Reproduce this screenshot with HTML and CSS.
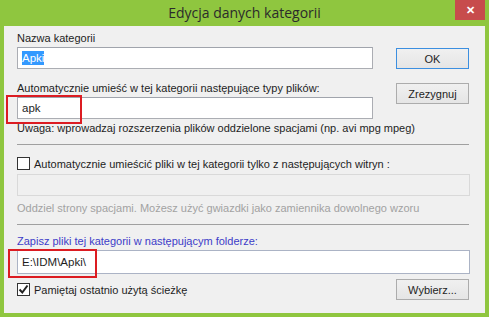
FILE: index.html
```html
<!DOCTYPE html>
<html lang="pl">
<head>
    <meta charset="UTF-8">
    <title>Edycja danych kategorii</title>
    <link rel="stylesheet" href="styles.css">
</head>
<body>
    <div class="window">
        <div class="titlebar">
            <span class="title">Edycja danych kategorii</span>
            <span class="close-btn">&#x2715;</span>
        </div>

        <div class="content">
            <div class="top">
                <div class="fields">
                    <label class="label">Nazwa kategorii</label>
                    <div class="input"><span class="selected">Apki</span></div>

                    <label class="label label-gap">Automatycznie umieść w tej kategorii następujące typy plików:</label>
                    <div class="input mark-wrap">
                        apk
                        <span class="mark mark-types"></span>
                    </div>
                </div>
                <div class="buttons">
                    <button class="btn btn-default">OK</button>
                    <button class="btn">Zrezygnuj</button>
                </div>
            </div>

            <p class="hint">Uwaga: wprowadzaj rozszerzenia plików oddzielone spacjami (np. avi mpg mpeg)</p>

            <hr class="sep">

            <div class="check-row">
                <span class="checkbox"></span>
                <span>Automatycznie umieścić pliki w tej kategorii tylko z następujących witryn :</span>
            </div>
            <div class="input input-disabled"></div>
            <p class="hint hint-disabled">Oddziel strony spacjami. Możesz użyć gwiazdki jako zamiennika dowolnego wzoru</p>

            <hr class="sep">

            <label class="label label-blue">Zapisz pliki tej kategorii w następującym folderze:</label>
            <div class="input input-folder mark-wrap">
                E:\IDM\Apki\
                <span class="mark mark-folder"></span>
            </div>

            <div class="bottom">
                <div class="check-row">
                    <span class="checkbox checked">
                        <svg width="11" height="11" viewBox="0 0 11 11"><path d="M1.5 5.5 L4.3 8.5 L9.5 1.5" fill="none" stroke="#222" stroke-width="2"/></svg>
                    </span>
                    <span>Pamiętaj ostatnio użytą ścieżkę</span>
                </div>
                <button class="btn">Wybierz...</button>
            </div>
        </div>
    </div>
</body>
</html>
```

FILE: styles.css
```css
body {
    margin: 0;
    font-family: "Liberation Sans", Arial, sans-serif;
    font-size: 11px;
    color: #1e1e1e;
}
.window {
    width: 489px;
    height: 317px;
    background-color: #8fc63f;
    padding: 0 4px 4px;
    box-sizing: border-box;
    display: flex;
    flex-direction: column;
}
.titlebar {
    height: 26px;
    flex-shrink: 0;
    display: flex;
    align-items: center;
    justify-content: center;
    position: relative;
}
.title {
    font-family: "Open Sans", sans-serif;
    font-size: 14px;
    color: #2b2b2b;
    margin-top: -1px;
}
.close-btn {
    position: absolute;
    top: 0;
    right: 0;
    width: 30px;
    height: 20px;
    background-color: #c74c4c;
    color: white;
    font-size: 11px;
    font-weight: bold;
    display: flex;
    align-items: center;
    justify-content: center;
}
.content {
    flex: 1;
    background-color: #f0f0f0;
    padding: 5px 15px 0 13px;
}
.top {
    display: flex;
    gap: 23px;
}
.fields {
    width: 356px;
    display: flex;
    flex-direction: column;
}
.label {
    display: block;
    height: 15px;
    line-height: 15px;
    margin-bottom: 1px;
}
.label-gap {
    margin-top: 12px;
}
.label-blue {
    color: #3c3cc8;
    margin-top: 9px;
}
.input {
    height: 22px;
    box-sizing: border-box;
    border: 1px solid #abadb3;
    border-top-color: #a0a4ac;
    background: white;
    padding: 0 4px;
    font-size: 11.5px;
    line-height: 20px;
    position: relative;
}
.selected {
    background-color: #3399ff;
    color: white;
    padding: 1px 0;
}
.input-disabled {
    background: #f0f0f0;
    border-color: #d9d9d9;
    margin-top: 3px;
}
.input-folder {
    height: 24px;
    line-height: 22px;
    border-color: #abb3c5;
}
.mark {
    position: absolute;
    border: 2px solid #dc1c22;
    pointer-events: none;
}
.mark-types {
    left: -12px;
    top: -3px;
    width: 72px;
    height: 25px;
}
.mark-folder {
    left: -10px;
    top: -2px;
    width: 85px;
    height: 25px;
}
.buttons {
    width: 73px;
    display: flex;
    flex-direction: column;
    gap: 14px;
    padding-top: 17px;
}
.btn {
    width: 73px;
    height: 21px;
    box-sizing: border-box;
    border: 1px solid #acacac;
    background: linear-gradient(#f0f0f0, #e5e5e5);
    font-family: inherit;
    font-size: 11px;
    color: #1e1e1e;
    padding: 0;
}
.btn-default {
    border-color: #3c8fe0;
}
.hint {
    margin: 2px 0 0;
    height: 15px;
    line-height: 15px;
}
.hint-disabled {
    color: #a2a2a2;
    margin-top: 5px;
}
.sep {
    border: none;
    border-top: 1px solid #a0a0a0;
    margin: 8px 1px 0 0;
}
.check-row {
    display: flex;
    align-items: center;
    gap: 4px;
    height: 15px;
    margin-top: 11px;
}
.checkbox {
    width: 13px;
    height: 13px;
    box-sizing: border-box;
    border: 1px solid #333;
    background: white;
    display: flex;
    align-items: center;
    justify-content: center;
}
.bottom {
    display: flex;
    justify-content: space-between;
    align-items: center;
    margin-top: 5px;
    padding-right: 1px;
}
.bottom .check-row {
    margin-top: 0;
}
```
